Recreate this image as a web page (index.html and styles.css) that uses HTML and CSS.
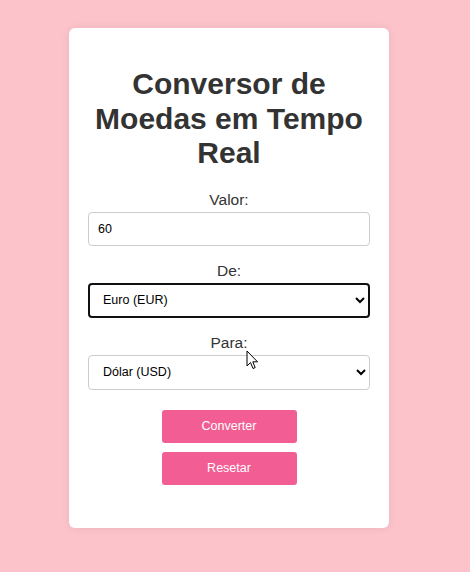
FILE: index.html
```html
<!DOCTYPE html>
<html lang="pt">
<head>
<meta charset="utf-8">
<title>Conversor de Moedas</title>
<link rel="stylesheet" href="styles.css">
</head>
<body>
  <div class="page">
    <div class="card">
      <h1 class="title">Conversor de Moedas em Tempo Real</h1>
      <div class="group">
        <label class="label" for="valor">Valor:</label>
        <input class="field" id="valor" type="text" value="60">
      </div>
      <div class="group">
        <label class="label" for="de">De:</label>
        <select class="field select focused" id="de">
          <option>Euro (EUR)</option>
        </select>
      </div>
      <div class="group">
        <label class="label" for="para">Para:</label>
        <select class="field select" id="para">
          <option>Dólar (USD)</option>
        </select>
      </div>
      <div class="actions">
        <button class="btn" type="button">Converter</button>
        <button class="btn" type="button">Resetar</button>
      </div>
    </div>
  </div>
  <svg class="cursor" width="13" height="20" viewBox="0 0 13 20" aria-hidden="true">
    <path d="M1 1 L1 16 L4.5 12.5 L7 18.5 L9.2 17.6 L6.8 11.8 L11.5 11.8 Z" fill="#fff" stroke="#000" stroke-width="1" stroke-linejoin="round"/>
  </svg>
</body>
</html>
```

FILE: styles.css
```css
html, body {
  margin: 0;
  padding: 0;
}
body {
  background: #fcc3ca;
  font-family: "Liberation Sans", Arial, sans-serif;
  color: #333;
  min-height: 572px;
  position: relative;
}
.page {
  padding-top: 28px;
  padding-left: 69px;
}
.card {
  width: 320px;
  height: 500px;
  box-sizing: border-box;
  background: #fff;
  border-radius: 6px;
  box-shadow: 0 0 8px rgba(0, 0, 0, 0.08);
  padding: 19px 19px;
  text-align: center;
}
.title {
  font-size: 30px;
  font-weight: bold;
  line-height: 34.5px;
  margin: 20px 0 20px;
  color: #333;
}
.group {
  display: flex;
  flex-direction: column;
  align-items: stretch;
  margin-bottom: 16px;
}
.label {
  display: block;
  font-size: 15.5px;
  line-height: 17px;
  color: #333;
  margin-bottom: 4px;
}
.field {
  box-sizing: border-box;
  width: 282px;
  height: 34px;
  padding: 0 9px;
  border: 1px solid #ccc;
  border-radius: 4px;
  background: #fff;
  font-family: "Liberation Sans", Arial, sans-serif;
  font-size: 12.5px;
  color: #000;
  text-align: left;
  margin: 0;
}
.select {
  height: 35px;
  padding: 0 6px 0 10px;
}
.focused {
  border: 2px solid #111;
  padding-left: 9px;
}
.actions {
  display: flex;
  flex-direction: column;
  align-items: center;
  gap: 9px;
  margin-top: 20px;
}
.btn {
  width: 135px;
  height: 33px;
  border: none;
  border-radius: 3px;
  background: #f25e93;
  color: #fff;
  font-family: "Liberation Sans", Arial, sans-serif;
  font-size: 12.5px;
  padding: 0;
  margin: 0;
}
.cursor {
  position: absolute;
  left: 246px;
  top: 350px;
}
```
